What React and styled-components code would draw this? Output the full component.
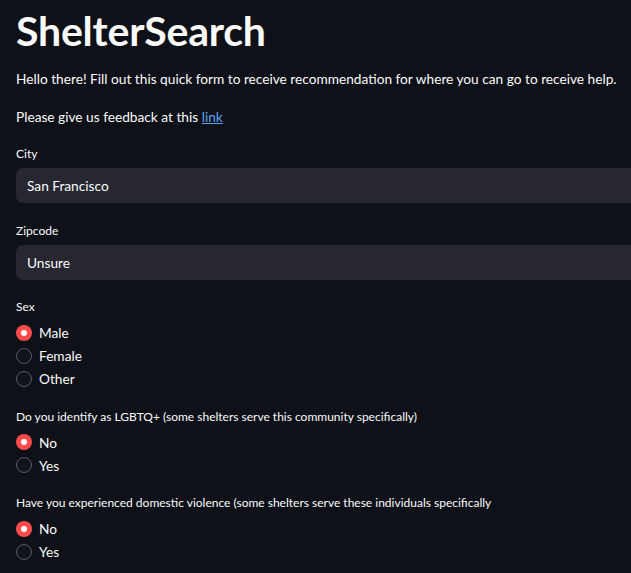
import styled, { createGlobalStyle } from "styled-components";

const GlobalStyle = createGlobalStyle`
  html, body {
    margin: 0;
    padding: 0;
    background: #0e1117;
    overflow: hidden;
  }
  body {
    font-family: Lato, "Noto Sans", sans-serif;
    color: #fafafa;
  }
`;

const Page = styled.main`
  width: 615px;
  padding: 0 0 0 16px;
`;

const Title = styled.h1`
  margin: 0;
  padding: 6px 0 11px;
  font-size: 41px;
  font-weight: 700;
  line-height: 49px;
  letter-spacing: -0.2px;
  white-space: nowrap;
`;

const Text = styled.p`
  margin: 0 0 13px;
  font-size: 13.7px;
  line-height: 25px;
  white-space: nowrap;
`;

const Link = styled.a`
  color: #5fa3f0;
  text-decoration: underline;
`;

const Field = styled.div`
  margin-top: ${(p) => p.$top || 0}px;
  margin-bottom: ${(p) => (p.$radio ? 18.5 : 19.5)}px;
`;

const Label = styled.div`
  font-size: 12px;
  line-height: 16px;
  margin-bottom: 6px;
  white-space: nowrap;
`;

const Input = styled.div`
  width: 680px;
  height: 35px;
  box-sizing: border-box;
  background: #262730;
  border-radius: 7px;
  padding: 0 11px;
  display: flex;
  align-items: center;
  font-size: 13.7px;
`;

const RadioGroup = styled.div`
  display: flex;
  flex-direction: column;
`;

const Option = styled.div`
  display: flex;
  align-items: center;
  gap: 7px;
  height: 23px;
  font-size: 13.7px;
`;

const Circle = styled.span`
  width: 16px;
  height: 16px;
  box-sizing: border-box;
  border-radius: 50%;
  display: flex;
  align-items: center;
  justify-content: center;
  background: ${(p) => (p.$on ? "#ff4b4b" : "#12141b")};
  border: ${(p) => (p.$on ? "none" : "1px solid #5a5c66")};

  &::after {
    content: "";
    display: ${(p) => (p.$on ? "block" : "none")};
    width: 6px;
    height: 6px;
    border-radius: 50%;
    background: #fff;
  }
`;

const Radio = ({ label, options, selected }) => (
  <Field $radio>
    <Label>{label}</Label>
    <RadioGroup>
      {options.map((o) => (
        <Option key={o}>
          <Circle $on={o === selected} />
          {o}
        </Option>
      ))}
    </RadioGroup>
  </Field>
);

const App = () => {
  return (
    <Page>
      <GlobalStyle />
      <Title>ShelterSearch</Title>
      <Text>
        Hello there! Fill out this quick form to receive recommendation for
        where you can go to receive help.
      </Text>
      <Text>
        Please give us feedback at this <Link href="#">link</Link>
      </Text>
      <Field $top={17}>
        <Label>City</Label>
        <Input>San Francisco</Input>
      </Field>
      <Field>
        <Label>Zipcode</Label>
        <Input>Unsure</Input>
      </Field>
      <Radio label="Sex" options={["Male", "Female", "Other"]} selected="Male" />
      <Radio
        label="Do you identify as LGBTQ+ (some shelters serve this community specifically)"
        options={["No", "Yes"]}
        selected="No"
      />
      <Radio
        label="Have you experienced domestic violence (some shelters serve these individuals specifically"
        options={["No", "Yes"]}
        selected="No"
      />
    </Page>
  );
};

export default App;
